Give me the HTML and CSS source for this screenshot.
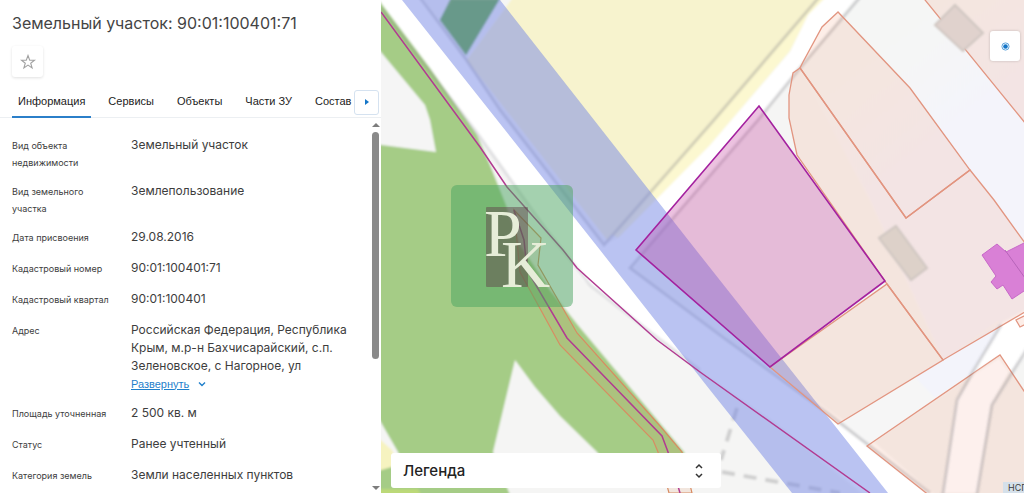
FILE: index.html
```
<!DOCTYPE html>
<html lang="ru">
<head>
  <meta charset="UTF-8">
  <meta name="viewport" content="width=device-width, initial-scale=1.0">
  <title>Земельный участок: 90:01:100401:71</title>
  <link rel="stylesheet" href="styles.css">
</head>
<body>

  <!-- Object card -->
  <aside class="panel">
    <header class="panel-header">
      <h1>Земельный участок: 90:01:100401:71</h1>
      <button class="fav-btn" aria-label="В избранное">
        <svg width="16" height="16" viewBox="0 0 16 16"><path d="M8 1.5l1.7 4.6 4.8.1-3.8 3 1.4 4.7L8 11.1l-4.1 2.8 1.4-4.7-3.8-3 4.8-.1z" fill="none" stroke="#a2a2a2" stroke-width="1.1"/></svg>
      </button>
    </header>

    <nav class="tabs">
      <div class="tab-list">
        <button class="tab active">Информация</button>
        <button class="tab">Сервисы</button>
        <button class="tab">Объекты</button>
        <button class="tab">Части ЗУ</button>
        <button class="tab">Состав</button>
      </div>
      <button class="tab-next" aria-label="Далее">
        <svg width="6" height="8" viewBox="0 0 6 8"><path d="M1 1l4 3-4 3z" fill="#1576c8"/></svg>
      </button>
    </nav>

    <div class="panel-body">
      <dl class="props">
        <dt>Вид объекта недвижимости</dt>
        <dd>Земельный участок</dd>
        <dt>Вид земельного участка</dt>
        <dd>Землепользование</dd>
        <dt>Дата присвоения</dt>
        <dd>29.08.2016</dd>
        <dt>Кадастровый номер</dt>
        <dd>90:01:100401:71</dd>
        <dt>Кадастровый квартал</dt>
        <dd>90:01:100401</dd>
        <dt>Адрес</dt>
        <dd>
          Российская Федерация, Республика Крым, м.р-н Бахчисарайский, с.п. Зеленовское, с Нагорное, ул
          <a href="#" class="expand">Развернуть
            <svg width="8" height="6" viewBox="0 0 8 6"><path d="M1 1.5l3 3 3-3" fill="none" stroke="#1f7fcb" stroke-width="1.4"/></svg>
          </a>
        </dd>
        <dt>Площадь уточненная</dt>
        <dd>2 500 кв. м</dd>
        <dt>Статус</dt>
        <dd>Ранее учтенный</dd>
        <dt>Категория земель</dt>
        <dd>Земли населенных пунктов</dd>
      </dl>
      <div class="scrollbar">
        <span class="arrow up"></span>
        <span class="track"><span class="thumb"></span></span>
        <span class="arrow down"></span>
      </div>
    </div>
  </aside>

  <!-- Map -->
  <main class="map">
    <svg class="map-canvas" viewBox="381 0 643 493" preserveAspectRatio="xMinYMin slice">
      <defs>
        <filter id="soft" x="-5%" y="-5%" width="110%" height="110%"><feGaussianBlur stdDeviation="0.8"/></filter>
        <linearGradient id="lane" gradientUnits="userSpaceOnUse" x1="890" y1="40" x2="960" y2="130">
          <stop offset="0" stop-color="#f5f6f5"/>
          <stop offset="1" stop-color="#f4f4fb"/>
        </linearGradient>
      </defs>

      <!-- base tiles -->
      <g filter="url(#soft)">
        <rect x="370" y="-10" width="670" height="520" fill="#f5f5f4"/>
        <path d="M850 -10L1040 -10V330L943 360L870 200L800 68z" fill="url(#lane)"/>
        <!-- roads -->
        <path d="M375 -5L480 138L545 230L583 280L650 335L700 371L775 422L870 500H940L875 443L770 369L630 268L758 120L858 -5H824L808 15L790 52L710 145L618 238L604 245L500 110L420 -5z" fill="#fff"/>
        <path d="M838 424L867 446L975 375L1000 320L943 360z" fill="#f6f6f6"/>
        <path d="M915 377L1002 322L972 373L935 398z" fill="#f3f4fb"/>
        <path d="M1030 308L1003 322L972 373L1000 355L1010 373L1030 346z" fill="#fff"/>
        <!-- woods -->
        <path d="M375 -5L430 68L477 135L490 165L506 205L520 245L550 290L577 324L684 452L690 470H610L597 452L560 416L535 387L515 360L493 452L512 500H420L398 452L375 412z" fill="#a5cc86"/>
        <path d="M375 45L400 75L425 105L430 120L436 152L405 148L375 144z" fill="#f5f5f5"/>
        <path d="M375 435L392 450L400 470H375z" fill="#f6f3c0"/>
        <path d="M375 472L395 466L430 500H375z" fill="#a5cc86"/>
        <path d="M375 489H418L424 500H375z" fill="#bcd978"/>
        <path d="M452 -5H502L466 55L440 20z" fill="#7bb847"/>
        <!-- fields -->
        <path d="M515 -5L467 60L600 228L618 238L710 145L790 51L808 15L828 -5z" fill="#fcf8d0"/>
        <path d="M515 -5L467 60L607 240L714 120L821 -5z" fill="#f7f3ce"/>
        <g class="tile-line">
          <path d="M418 -5L465 58L500 110L604 245L714 120L821 -5"/>
          <path d="M862 -5L800 68L758 120L630 268L720 335L830 415L930 493"/>
          <path d="M381 8L477 133L548 232L590 285L650 332L700 370" opacity=".7"/>
        </g>
        <path d="M737 408L721 460M722 472L840 493" fill="none" stroke="#cfcfcf" stroke-width="4" stroke-dasharray="13 9"/>
      </g>

      <!-- protection zone -->
      <path d="M402 0H500L696 250L888 493H792L710 390L600 250z" fill="#7587e5" fill-opacity=".5"/>
      <path d="M452 0H499L466 55L440 20z" fill="#43896c" fill-opacity=".3" filter="url(#soft)"/>

      <!-- parcels -->
      <g class="parcel">
        <path d="M838 12L822 27L803 62L800 68L906 218L970 170L910 88z"/>
        <path d="M800 68L793 73L789 95L789 118L797 155L887 284L943 360L1030 309V250L994 200L970 170L906 218z"/>
        <path d="M887 284L943 360L838 424L770 367z"/>
        <path d="M867 446L1000 355L1030 400V500H935z"/>
        <path d="M921 -5L1030 129V-5z"/>
        <path d="M1030 313L1016 320L1020 327L1030 322"/>
      </g>
      <path d="M999 358L1009 372L991 405L977 493H943L957 400L974 374z" fill="#fdf0ed" filter="url(#soft)"/>
      <g class="tile-line" filter="url(#soft)">
        <path d="M1001 325L972 373L957 400L942 500"/>
        <path d="M1030 344L992 405L976 500"/>
      </g>
      <path class="track-zone" d="M514 210L541 238L538 265L577 333L660 426L682 452L692 493H669L658 452L653 440L560 345L520 272z"/>

      <!-- buildings -->
      <g filter="url(#soft)" stroke="#cfc6c1" stroke-width="2">
        <path d="M955 5L983 33L963 51L935 25z" fill="#e0d2cd"/>
        <path d="M896 226L927 268L911 280L879 238z" fill="#ddd1c9"/>
      </g>
      <path d="M997 244L982 255L996 276L991 282L997 289L1003 285L1012 299L1030 287V240L1018 246L1006 252z" fill="#d980d6" stroke="#c768c8"/>
      <path d="M1005 250L1030 285" stroke="#b764ba" fill="none"/>

      <!-- boundaries -->
      <g fill="none" stroke="#b23b91" stroke-width="1.5">
        <path d="M381 12L480 147L507 187L563 250L577 268L627 313L657 340L700 372L870 493"/>
        <path d="M514 210L524 240L527 270L567 338L662 436L668 452L680 493"/>
      </g>
      <path d="M636 250L759 106L885 281L770 367z" fill="#c03498" fill-opacity=".3" stroke="#a4219f" stroke-width="1.6"/>

      <!-- agency mark -->
      <rect x="451" y="185" width="122" height="122" rx="6" fill="#49a35f" fill-opacity=".5"/>
      <rect x="486" y="207" width="42" height="80" rx="1" fill="#61464b" fill-opacity=".5"/>
      <g class="mark">
        <text x="484" y="256">P</text>
        <text x="501" y="287">K</text>
      </g>
    </svg>

    <button class="locate-btn" aria-label="Слои">
      <svg width="9" height="9" viewBox="0 0 9 9"><circle cx="4.5" cy="4.5" r="3.6" fill="#fff" stroke="#5fa5dc"/><circle cx="4.5" cy="4.5" r="2.3" fill="#1576c8"/></svg>
    </button>

    <button class="legend">
      <span>Легенда</span>
      <svg width="10" height="16" viewBox="0 0 10 16"><path d="M2 5l3-3 3 3M2 11l3 3 3-3" fill="none" stroke="#333" stroke-width="1.5"/></svg>
    </button>

    <div class="attribution">НСПД</div>
  </main>

</body>
</html>
```
FILE: styles.css
```
* { box-sizing: border-box; }

html, body {
  margin: 0;
  padding: 0;
  height: 100%;
}

body {
  display: flex;
  overflow: hidden;
  font-family: Inter, "Liberation Sans", sans-serif;
  color: #3d3d3d;
  background: #fff;
}

button {
  font-family: inherit;
  color: inherit;
  border: none;
  padding: 0;
  background: #fff;
  cursor: pointer;
}

/* Left panel */
.panel {
  flex: 0 0 381px;
  display: flex;
  flex-direction: column;
  min-width: 0;
  min-height: 0;
}

.panel-header {
  padding: 12px 12px 10px;
}

h1 {
  margin: 0 0 12px;
  font-size: 16px;
  line-height: 22px;
  font-weight: 400;
  color: #444;
}

.fav-btn {
  display: flex;
  align-items: center;
  justify-content: center;
  width: 31px;
  height: 31px;
  border-radius: 3px;
  box-shadow: 0 1px 3px rgba(0, 0, 0, 0.12);
}

.tabs {
  display: flex;
  align-items: center;
  height: 31px;
  padding: 0 2px 0 12px;
  border-bottom: 1px solid #eceff2;
}

.tab-list {
  flex: 1;
  display: flex;
  gap: 11px;
  height: 31px;
  min-width: 0;
  overflow: hidden;
}

.tab {
  flex-shrink: 0;
  padding: 0 6px;
  border-bottom: 2px solid transparent;
  background: none;
  font-family: "Liberation Sans", Arial, sans-serif;
  font-size: 11px;
  white-space: nowrap;
  color: #222;
}

.tab.active {
  border-bottom-color: #2b7fc9;
}

.tab-next {
  display: flex;
  align-items: center;
  justify-content: center;
  width: 25px;
  height: 25px;
  border: 1px solid #d5e2f0;
  border-radius: 3px;
}

.panel-body {
  flex: 1;
  display: flex;
  min-height: 0;
}

.props {
  flex: 1;
  display: grid;
  grid-template-columns: 107px 1fr;
  column-gap: 12px;
  row-gap: 12px;
  align-content: start;
  margin: 0;
  padding: 18px 12px 0;
  overflow: hidden;
}

.props dt {
  padding-top: 1px;
  margin-bottom: -1px;
  font-size: 9px;
  line-height: 17px;
}

.props dd {
  margin: 0;
  min-height: 19px;
  font-size: 12px;
  line-height: 18px;
}

.expand {
  display: flex;
  align-items: center;
  gap: 9px;
  height: 17px;
  font-family: "Liberation Sans", Arial, sans-serif;
  font-size: 11px;
  color: #1f7fcb;
}

.scrollbar {
  display: flex;
  flex-direction: column;
  align-items: center;
  width: 11px;
  padding: 5px 0 3px;
}

.track {
  flex: 1;
  width: 7px;
  margin: 5px 0;
}

.thumb {
  display: block;
  height: 65%;
  border-radius: 4px;
  background: #8a8a8a;
}

.arrow {
  border: 4px solid transparent;
}

.arrow.up {
  border-top: none;
  border-bottom: 4px solid #7d7d7d;
}

.arrow.down {
  border-bottom: none;
  border-top: 4px solid #7d7d7d;
}

/* Map */
.map {
  flex: 1;
  position: relative;
  min-width: 0;
  overflow: hidden;
}

.map-canvas {
  display: block;
  width: 100%;
  height: 100%;
}

.tile-line {
  fill: none;
  stroke: #77777f;
  stroke-opacity: 0.3;
  stroke-width: 3px;
}

.parcel {
  fill: #f07850;
  fill-opacity: 0.13;
  stroke: #e29580;
  stroke-width: 1.3px;
}

.track-zone {
  fill: #e08050;
  fill-opacity: 0.13;
  stroke: #d88c62;
  stroke-width: 1.2px;
}

.mark {
  font-family: "Liberation Serif", "Times New Roman", serif;
  font-size: 68px;
  fill: #e6edd8;
}

.locate-btn {
  position: absolute;
  top: 31px;
  right: 4px;
  display: flex;
  align-items: center;
  justify-content: center;
  width: 30px;
  height: 30px;
  border-radius: 3px;
  box-shadow: 0 0 3px rgba(0, 0, 0, 0.2);
}

.legend {
  position: absolute;
  left: 10px;
  bottom: 5px;
  display: flex;
  align-items: center;
  justify-content: space-between;
  width: 330px;
  height: 35px;
  padding: 0 17px 0 12px;
  border-radius: 3px;
  font-size: 15px;
  font-weight: 500;
  color: #222;
}

.attribution {
  position: absolute;
  right: 0;
  bottom: 0;
  width: 21px;
  height: 11px;
  padding-left: 5px;
  overflow: hidden;
  font-size: 9px;
  line-height: 12px;
  background: #d5e0ea;
}
```
